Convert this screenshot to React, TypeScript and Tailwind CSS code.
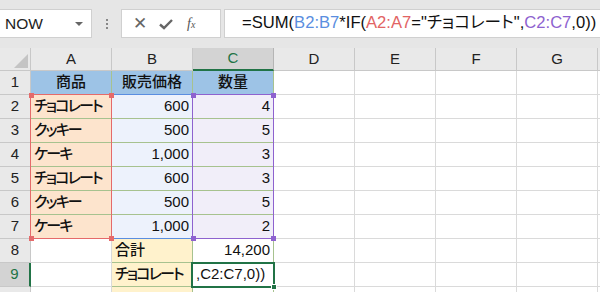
import React from "react";

const FONT = "[font-family:'Liberation_Sans','Noto_Sans_CJK_JP',sans-serif] [font-feature-settings:'palt']";

const COLS = ["A", "B", "C", "D", "E", "F", "G", ""];
const COL_W = [81, 81, 81, 81, 81, 81, 81, 40];

type Cell = { text?: string; align?: "left" | "right" | "center"; bg?: string; green?: boolean };

const row = (a: Cell, b: Cell, c: Cell): Cell[] => [a, b, c];

const hdr = "bg-[#9dc3e6]";
const org = "bg-[#fde4cd]";
const blu = "bg-[#edf2fc]";
const pur = "bg-[#f1eef9]";
const yel = "bg-[#fff2cc]";

const data: Cell[][] = [
  row(
    { text: "商品", align: "center", bg: hdr, green: true },
    { text: "販売価格", align: "center", bg: hdr, green: true },
    { text: "数量", align: "center", bg: hdr, green: true }
  ),
  row({ text: "チョコレート", bg: org, green: true }, { text: "600", align: "right", bg: blu, green: true }, { text: "4", align: "right", bg: pur, green: true }),
  row({ text: "クッキー", bg: org, green: true }, { text: "500", align: "right", bg: blu, green: true }, { text: "5", align: "right", bg: pur, green: true }),
  row({ text: "ケーキ", bg: org, green: true }, { text: "1,000", align: "right", bg: blu, green: true }, { text: "3", align: "right", bg: pur, green: true }),
  row({ text: "チョコレート", bg: org, green: true }, { text: "600", align: "right", bg: blu, green: true }, { text: "3", align: "right", bg: pur, green: true }),
  row({ text: "クッキー", bg: org, green: true }, { text: "500", align: "right", bg: blu, green: true }, { text: "5", align: "right", bg: pur, green: true }),
  row({ text: "ケーキ", bg: org, green: true }, { text: "1,000", align: "right", bg: blu, green: true }, { text: "2", align: "right", bg: pur, green: true }),
  row({}, { text: "合計", bg: yel, green: true }, { text: "14,200", align: "right", green: true }),
  row({}, { text: "チョコレート", bg: yel, green: true }, { text: ",C2:C7,0))", green: true }),
  row({}, { bg: yel, green: true }, { green: true }),
];

const isKana = (s?: string) => !!s && /[\u30a0-\u30ff]/.test(s);
const isCjk = (s?: string) => !!s && /[^\x00-\x7f]/.test(s);

function Handle({ x, y, color }: { x: number; y: number; color: string }) {
  return (
    <div
      className="absolute w-[5px] h-[5px]"
      style={{ left: x - 2, top: y - 2, background: color }}
    />
  );
}

function Range({ x, y, w, h, color }: { x: number; y: number; w: number; h: number; color: string }) {
  return (
    <div
      className="absolute border-[1.5px]"
      style={{ left: x, top: y, width: w, height: h, borderColor: color }}
    />
  );
}

function Toolbar() {
  return (
    <div className="h-[48px] bg-[#e6e6e6] flex items-start pt-[9px] gap-0">
      <div className="w-[92px] h-[29px] bg-white border border-[#d0d0d0] border-l-0 flex items-center justify-between pl-[5px] pr-[8px]">
        <span className="text-[15.5px] text-[#222]">NOW</span>
        <span className="w-0 h-0 border-l-[4px] border-r-[4px] border-t-[4px] border-l-transparent border-r-transparent border-t-[#666]" />
      </div>
      <div className="w-[29px] h-[29px] flex flex-col items-center justify-center gap-[2px]">
        <span className="w-[2px] h-[2px] bg-[#888]" />
        <span className="w-[2px] h-[2px] bg-[#888]" />
        <span className="w-[2px] h-[2px] bg-[#888]" />
      </div>
      <div className="w-[100px] h-[29px] bg-white border border-[#d0d0d0] flex items-center text-[#666]">
        <span className="w-[36px] text-center text-[17px] leading-none">✕</span>
        <svg width="16" height="14" viewBox="0 0 16 14">
          <path d="M2 7.5 L6 11 L14 3" stroke="#666" strokeWidth="2.4" fill="none" />
        </svg>
        <span className="ml-[13px] text-[14px] italic [font-family:'Liberation_Serif',serif] text-[#555]">
          f<span className="text-[10px]">x</span>
        </span>
      </div>
      <div className="ml-[3px] flex-1 h-[29px] bg-white border border-[#d0d0d0] border-r-0 flex items-center pl-[17px] text-[16.6px] whitespace-nowrap overflow-hidden text-[#111]">
        <span>=SUM(</span>
        <span className="text-[#5a8ee0]">B2:B7</span>
        <span>*IF(</span>
        <span className="text-[#e26464]">A2:A7</span>
        <span>="チョコレート",</span>
        <span className="text-[#8e62cf]">C2:C7</span>
        <span>,0))</span>
      </div>
    </div>
  );
}

function Grid() {
  return (
    <div className="relative">
      {/* column headers */}
      <div className="flex h-[23px]">
        <div className="w-[31px] shrink-0 bg-[#e9e9e9] border-r border-b border-[#c8c8c8] relative">
          <div className="absolute right-[2px] bottom-[2px] w-0 h-0 border-l-[14px] border-l-transparent [border-bottom:14px_solid_#c4c4c4]" />
        </div>
        {COLS.map((c, i) => (
          <div
            key={i}
            style={{ width: COL_W[i] }}
            className={`shrink-0 flex items-center justify-center text-[15px] border-r ${
              c === "C"
                ? "bg-[#d3d3d3] text-[#217346] border-b-2 border-b-[#217346] border-r-[#b5b5b5]"
                : "bg-[#e9e9e9] text-[#222] border-b border-[#c8c8c8]"
            }`}
          >
            {c}
          </div>
        ))}
      </div>
      {data.map((cells, r) => (
        <div key={r} className="flex h-[24px]">
          <div
            className={`w-[31px] shrink-0 flex items-center justify-center text-[15px] border-b border-[#c8c8c8] ${
              r === 8
                ? "bg-[#d3d3d3] text-[#217346] border-r-2 border-r-[#217346]"
                : "bg-[#e9e9e9] text-[#222] border-r"
            }`}
          >
            {r + 1}
          </div>
          {COLS.map((_, i) => {
            const cell: Cell = cells[i] || {};
            const al =
              cell.align === "right" ? "justify-end pr-[3px]" : cell.align === "center" ? "justify-center" : "justify-start pl-[3px]";
            return (
              <div
                key={i}
                style={{ width: COL_W[i] }}
                className={`shrink-0 flex items-center overflow-hidden whitespace-nowrap text-[15px] text-[#111] border-r border-b ${al} ${
                  cell.bg || "bg-white"
                } ${cell.green ? "border-[#a7c28f]" : "border-[#dadada]"} ${isKana(cell.text) ? "tracking-[-1.8px] text-[15.5px]" : ""} ${
                  isCjk(cell.text) ? "font-medium" : ""
                }`}
              >
                {cell.text}
              </div>
            );
          })}
        </div>
      ))}
      {/* range overlays */}
      <Range x={111} y={46} w={82} h={145} color="#5a8ee0" />
      <Range x={30} y={46} w={82} h={145} color="#e56a6a" />
      <Range x={192} y={46} w={82} h={145} color="#8e62cf" />
      <Handle x={31} y={47} color="#e56a6a" />
      <Handle x={111} y={47} color="#e56a6a" />
      <Handle x={31} y={190} color="#e56a6a" />
      <Handle x={111} y={190} color="#e56a6a" />
      <Handle x={193} y={47} color="#8e62cf" />
      <Handle x={273} y={47} color="#8e62cf" />
      <Handle x={193} y={190} color="#8e62cf" />
      <Handle x={273} y={190} color="#8e62cf" />
      {/* active cell */}
      <div className="absolute left-[191px] top-[214px] w-[84px] h-[26px] border-2 border-[#217346]" />
      <div className="absolute left-[271px] top-[236px] w-[6px] h-[6px] bg-[#217346] border border-white" />
    </div>
  );
}

export default function App() {
  return (
    <div className={`w-[600px] h-[292px] overflow-hidden bg-white ${FONT}`}>
      <Toolbar />
      <Grid />
    </div>
  );
}
